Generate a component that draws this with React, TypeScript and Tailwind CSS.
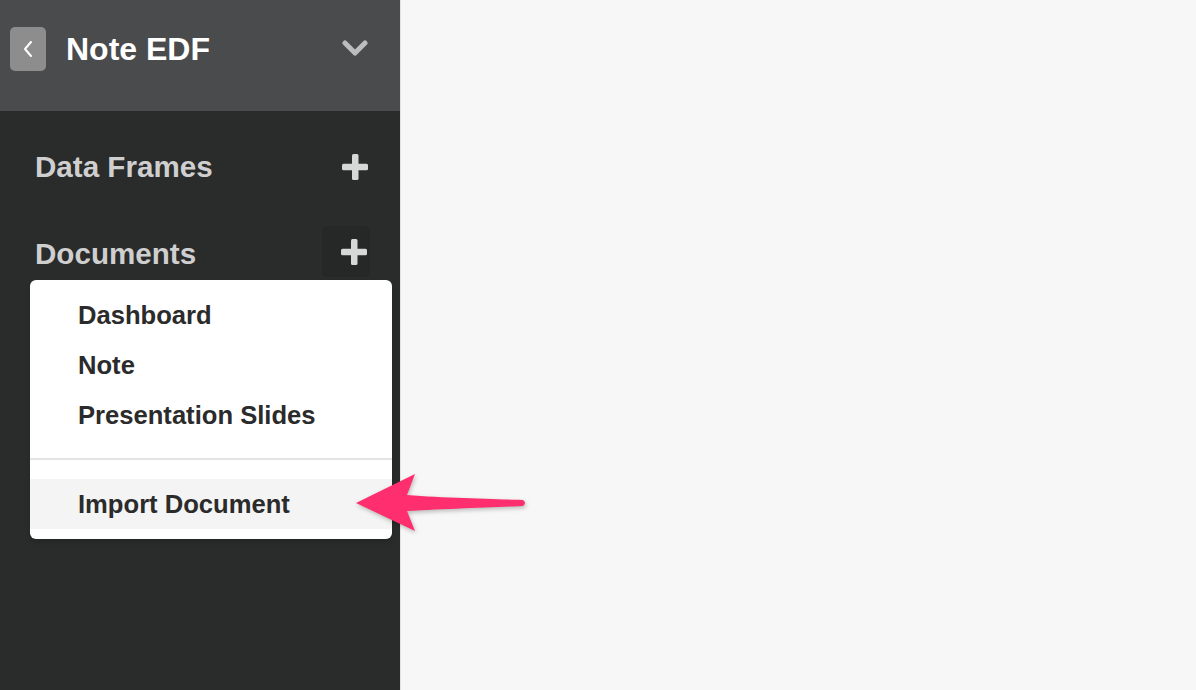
import React from "react";

function Plus() {
  return (
    <svg width="26" height="26" viewBox="0 0 26 26">
      <rect x="10" y="0" width="6.5" height="26" rx="1.5" fill="#d6d8d8" />
      <rect x="0" y="9.75" width="26" height="6.5" rx="1.5" fill="#d6d8d8" />
    </svg>
  );
}

export default function App() {
  return (
    <div
      className="flex h-[690px] w-[1196px] overflow-hidden bg-[#f7f7f7]"
      style={{ fontFamily: '"Liberation Sans", Arial, sans-serif' }}
    >
      <aside className="relative flex w-[400px] shrink-0 flex-col bg-[#2a2b2b]">
        <header className="flex h-[111px] items-center bg-[#4a4b4d] pb-[14px] pl-[10px] pr-[32px]">
          <button className="flex h-[44px] w-[36px] items-center justify-center rounded-[5px] bg-[#8d8d8d]">
            <svg width="12" height="18" viewBox="0 0 12 18">
              <path d="M9 2 L3 9 L9 16" fill="none" stroke="#fff" strokeWidth="2" strokeLinecap="round" strokeLinejoin="round" />
            </svg>
          </button>
          <h1 className="ml-[20px] flex-1 text-[32px] font-bold leading-none text-white">Note EDF</h1>
          <svg width="26" height="17" viewBox="0 0 26 17">
            <path d="M3 3 L13 13 L23 3" fill="none" stroke="#bdbdbd" strokeWidth="5" strokeLinecap="round" strokeLinejoin="round" />
          </svg>
        </header>
        <div className="flex h-[113px] items-center justify-between pb-[1px] pl-[35px] pr-[32px]">
          <span className="text-[29.6px] font-bold text-[#cfcfcf]">Data Frames</span>
          <Plus />
        </div>
        <div className="mt-[2px] flex h-[51px] items-center justify-between pl-[35px] pr-[30px]">
          <span className="pt-[5px] text-[29.6px] font-bold text-[#cfcfcf]">Documents</span>
          <div className="flex h-[51px] w-[48px] items-center justify-end rounded-[5px] bg-[#262828] pr-[3px]">
            <Plus />
          </div>
        </div>
        <div className="absolute left-[30px] top-[280px] w-[362px] rounded-[6px] bg-white pt-[10px] pb-[10px] shadow-md">
          {["Dashboard", "Note", "Presentation Slides"].map((t) => (
            <div key={t} className="flex h-[50px] items-center pl-[48px] text-[25.6px] font-bold text-[#2b2b2b]">
              {t}
            </div>
          ))}
          <div className="mt-[18px] mb-[19px] h-[2px] bg-[#e4e4e4]" />
          <div className="flex h-[50px] items-center bg-[#f4f4f4] pl-[48px] text-[25.6px] font-bold text-[#2b2b2b]">
            Import Document
          </div>
        </div>
      </aside>
      <main className="relative flex-1 border-l border-[#e2e2e2]">
        <svg
          className="absolute left-[-46px] top-[470px]"
          width="180"
          height="64"
          viewBox="0 0 180 64"
          style={{ filter: "drop-shadow(1px 2px 2px rgba(0,0,0,0.25))" }}
        >
          <path
            d="M1 33 L60 4 L52 25 C 90 28, 140 29, 168 30 Q 172 33 168 36 C 140 37, 90 39, 52 41 L60 61 Z"
            fill="#ff2e6e"
          />
        </svg>
      </main>
    </div>
  );
}
